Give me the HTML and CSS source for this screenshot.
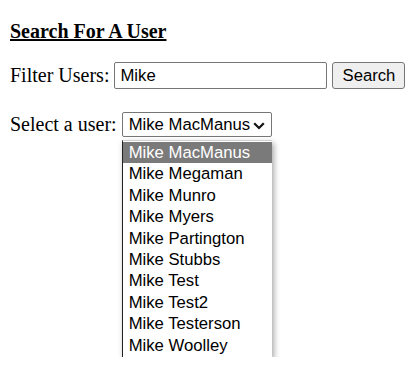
FILE: index.html
```html
<!DOCTYPE html>
<html lang="en">

<head>
    <meta charset="UTF-8">
    <title>Search For A User</title>
    <link rel="stylesheet" href="styles.css">
</head>

<body>
    <h4 class="title">Search For A User</h4>

    <!-- filter row -->
    <div class="row filter-row">
        <label for="filter">Filter Users:</label>
        <input class="filter-input" id="filter" type="text" value="Mike">
        <button class="search-btn">Search</button>
    </div>

    <!-- select row -->
    <div class="row select-row">
        <label class="select-label" for="users">Select a user:</label>
        <div class="picker">
            <div class="select-box">
                <select class="user-select" id="users">
                    <option>Mike MacManus</option>
                </select>
                <svg class="chevron" width="12" height="8" viewBox="0 0 12 8">
                    <path d="M1.2 1.2 L6 6 L10.8 1.2" fill="none" stroke="#111" stroke-width="2.2"/>
                </svg>
            </div>
            <div class="user-list">
                <div class="user-item selected">Mike MacManus</div>
                <div class="user-item">Mike Megaman</div>
                <div class="user-item">Mike Munro</div>
                <div class="user-item">Mike Myers</div>
                <div class="user-item">Mike Partington</div>
                <div class="user-item">Mike Stubbs</div>
                <div class="user-item">Mike Test</div>
                <div class="user-item">Mike Test2</div>
                <div class="user-item">Mike Testerson</div>
                <div class="user-item">Mike Woolley</div>
            </div>
        </div>
    </div>
</body>

</html>
```

FILE: styles.css
```css
body {
    margin: 0;
    padding: 0 10px;
    font-family: 'Liberation Serif', 'Times New Roman', serif;
    font-size: 20px;
    color: #000;
    background: #fff;
}

.title {
    font-size: 20px;
    font-weight: bold;
    text-decoration: underline;
    margin: 19px 0 0;
    line-height: 24px;
}

.row {
    display: flex;
    align-items: center;
}

.filter-row {
    margin-top: 19px;
    height: 27px;
}

.filter-input {
    box-sizing: border-box;
    width: 213px;
    height: 27px;
    margin-left: 5px;
    padding: 1px 5px 0;
    border: 1px solid #767676;
    border-radius: 2px;
    font-family: 'Liberation Sans', Arial, sans-serif;
    font-size: 16.7px;
    color: #000;
}

.search-btn {
    box-sizing: border-box;
    width: 73px;
    height: 27px;
    margin-left: 5px;
    padding: 0;
    background: #efefef;
    border: 1px solid #767676;
    border-radius: 3px;
    font-family: 'Liberation Sans', Arial, sans-serif;
    font-size: 16.7px;
    color: #000;
}

.select-row {
    margin-top: 23px;
    align-items: flex-start;
}

.select-label {
    line-height: 25px;
}

.picker {
    margin-left: 5px;
    width: 150px;
}

.select-box {
    position: relative;
    height: 25px;
}

.user-select {
    appearance: none;
    box-sizing: border-box;
    width: 150px;
    height: 25px;
    padding: 0 0 0 6px;
    border: 1px solid #767676;
    border-radius: 2px;
    background: #fff;
    font-family: 'Liberation Sans', Arial, sans-serif;
    font-size: 16.7px;
    color: #000;
    display: block;
}

.chevron {
    position: absolute;
    top: 10px;
    right: 7px;
    pointer-events: none;
}

/* open list of the select */
.user-list {
    margin-top: 3px;
    width: 150px;
    box-sizing: border-box;
    padding: 1px 0;
    background: #fff;
    border-left: 1px solid #222;
    border-top: 1px solid #d0d0d0;
    box-shadow: 2px 3px 6px rgba(0, 0, 0, 0.35);
    font-family: 'Liberation Sans', Arial, sans-serif;
    font-size: 16.7px;
}

.user-item {
    height: 21.4px;
    line-height: 21.4px;
    padding-left: 6px;
    white-space: nowrap;
}

.user-item.selected {
    background: #7a7a7a;
    color: #fff;
}
```
